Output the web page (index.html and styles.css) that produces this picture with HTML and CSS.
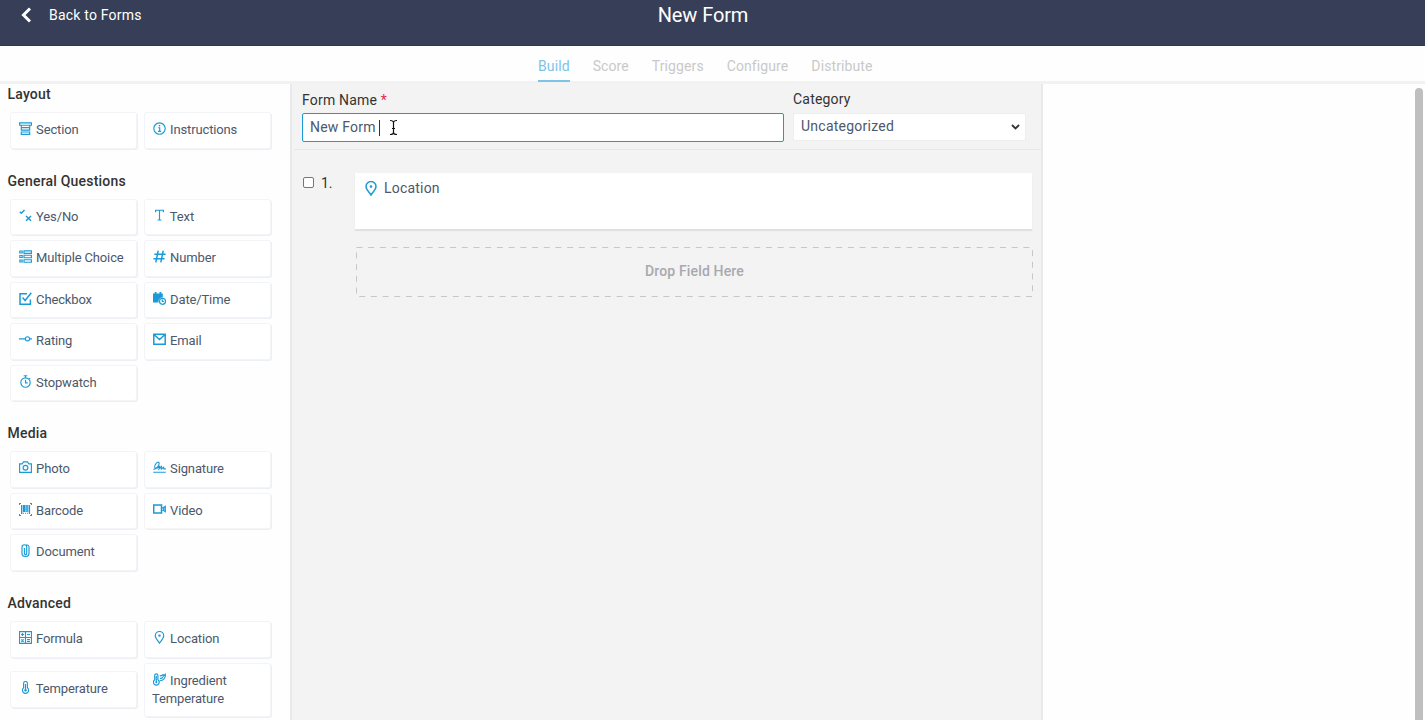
FILE: index.html
```html
<!DOCTYPE html>
<html lang="en">

<head>
    <meta charset="UTF-8">
    <meta name="viewport" content="width=device-width, initial-scale=1.0">
    <title>New Form</title>
    <link rel="stylesheet" href="styles.css">
</head>

<body>
    <header class="topbar">
        <a class="back">
            <svg class="back-icon" viewBox="0 0 11 16"><path d="M9 1.5L2.5 8L9 14.5" /></svg>
            Back to Forms
        </a>
        <h1>New Form</h1>
    </header>

    <nav class="tabs">
        <a class="tab active">Build</a>
        <a class="tab">Score</a>
        <a class="tab">Triggers</a>
        <a class="tab">Configure</a>
        <a class="tab">Distribute</a>
    </nav>

    <main class="workspace">
        <!-- Field palette -->
        <aside class="palette">
            <section class="group">
                <h2>Layout</h2>
                <div class="fields">
                    <div class="field"><svg class="icon" viewBox="0 0 13 13"><path d="M.6 .8h11.8v2.4H.6zM2.3 3.2v2.3h8.4V3.2M2.3 5.7h8.4v2.4H2.3zM2.3 10h8.4v2.3H2.3z" /></svg> Section</div>
                    <div class="field"><svg class="icon" viewBox="0 0 13 13"><circle cx="6.5" cy="6.5" r="5.7" /><path d="M5.2 5.7h1.5v3.6M5 9.4h3.2" /><path class="fill" d="M5.8 2.9h1.5v1.5H5.8z" /></svg> Instructions</div>
                </div>
            </section>

            <section class="group">
                <h2>General Questions</h2>
                <div class="fields">
                    <div class="field"><svg class="icon thick" viewBox="0 0 13 13"><path d="M.8 2.8L2.3 4.2L5.5 .9M7 7l5 4.8M12 7l-5 4.8" /></svg> Yes/No</div>
                    <div class="field"><svg class="icon" viewBox="0 0 13 13"><path d="M2.6 3.3V1.2h7.8v2.1M6.5 1.2v9.8M4.6 11h3.8" /></svg> Text</div>
                    <div class="field"><svg class="icon" viewBox="0 0 13 13"><path d="M.8 1h2.4v2H.8zM.8 5.5h2.4v2H.8zM.8 10h2.4v2H.8zM5 .8h7.4v2.5H5zM5 5.2h7.4v2.5H5zM5 9.7h7.4v2.5H5z" /></svg> Multiple Choice</div>
                    <div class="field"><svg class="icon thick" viewBox="0 0 13 13"><path d="M5.2 .7L2.8 12.3M10.2 .7L7.8 12.3M1.4 4.2h11.2M.4 8.7h11.2" /></svg> Number</div>
                    <div class="field"><svg class="icon thick" viewBox="0 0 13 13"><path d="M8 1.8H1v10.4h10.4V7.5M3.6 5.5l2.5 3L12.3 .8" /></svg> Checkbox</div>
                    <div class="field"><svg class="icon" viewBox="0 0 13 13"><path class="fill" d="M0 1.5h1.7V0h1.8v1.5h3V0h1.8v1.5h1.5v4A4 4 0 0 0 5.6 10.6H0z" /><circle cx="9.5" cy="9.3" r="3" /><path d="M9.3 7.5v2h1.6" /></svg> Date/Time</div>
                    <div class="field"><svg class="icon" viewBox="0 0 13 13"><path d="M0 5.8h6.2M10.8 5.8H13" /><circle cx="8.5" cy="5.8" r="2.1" /></svg> Rating</div>
                    <div class="field"><svg class="icon thick" viewBox="0 0 13 13"><path d="M.8 1.2h11.4v10H.8zM1 1.5l5.5 5L12 1.5" /></svg> Email</div>
                    <div class="field"><svg class="icon" viewBox="0 0 13 13"><circle cx="6.5" cy="7.5" r="4.7" /><path d="M4.7 .7h3.6M6.5 .8v2M10.2 3.2l1 1M6.5 4.8v3h2.2" /></svg> Stopwatch</div>
                </div>
            </section>

            <section class="group">
                <h2>Media</h2>
                <div class="fields">
                    <div class="field"><svg class="icon" viewBox="0 0 13 13"><path d="M.6 2.8h2.6L4.5 .9h4l1.3 1.9h2.6v8.5H.6z" /><circle cx="6.5" cy="6.7" r="2.4" /></svg> Photo</div>
                    <div class="field"><svg class="icon" viewBox="0 0 13 13"><path d="M.2 11.2h12.6M.4 8.5C4 7.7 7 3.8 6 1.6C5-.2 1 3.8 1.7 6.4c.5 1.8 3.4 1.1 5.1-1.6L6 8l2.3-2.3V8l2.3-1.7.2 1.5h2" /></svg> Signature</div>
                    <div class="field"><svg class="icon" viewBox="0 0 13 13"><path class="fill" d="M0 0h2v1H1v1H0zM11 0h2v2h-1V1h-1zM0 11h1v1h1v1H0zM12 11h1v2h-2v-1h1zM2 2h1.4v9H2zM4 2h2.3v7H4zM6.7 2h1.1v7H6.7zM8.2 2h1.1v7H8.2zM9.8 2h1.3v9H9.8zM4 9.8h1v1H4zM6 9.8h1v1H6zM8 9.8h1v1H8z" /></svg> Barcode</div>
                    <div class="field"><svg class="icon" viewBox="0 0 13 13"><path class="stroke-mid" d="M.7 1.9h7.8v8.2H.7z" /><path d="M8.6 4.8h1.5l2.2-1.5v5.4l-2.2-1.5H8.6M10.8 4.5v3" /></svg> Video</div>
                    <div class="field"><svg class="icon" viewBox="0 0 13 13"><path d="M5.4 4v5.2c0 1.8 2.3 1.8 2.3 0V3c0-3-4.7-3-4.7 0v6.4c0 4 7 4 7 0V3.2C10 1.5 8.8.7 7.4.7" /></svg> Document</div>
                </div>
            </section>

            <section class="group">
                <h2>Advanced</h2>
                <div class="fields">
                    <div class="field"><svg class="icon" viewBox="0 0 13 13"><path d="M.5 .6h12v11.8H.5zM6.5 .6v11.8M.5 6.5h12M3.5 2v3M2 3.5h3M8 3.5h3M2.3 8.4l2.4 2.4M4.7 8.4l-2.4 2.4M8 8.6h3M8 10.5h3" /></svg> Formula</div>
                    <div class="field"><svg class="icon" viewBox="0 0 13 13"><path d="M6.5 12.2C4.7 9.6 2.3 7.2 2.3 4.7a4.2 4.2 0 0 1 8.4 0c0 2.5-2.4 4.9-4.2 7.5z" /><circle class="fill" cx="6.5" cy="4.6" r="1.2" /></svg> Location</div>
                    <div class="field"><svg class="icon" viewBox="0 0 13 13"><path d="M4.6 6.8V2.4a1.9 1.9 0 0 1 3.8 0v4.4a3.1 3.1 0 1 1-3.8 0zM6.5 3v6" /><circle class="fill" cx="6.5" cy="9.2" r="1.2" /></svg> Temperature</div>
                    <div class="field"><svg class="icon" viewBox="0 0 13 13"><path d="M1.7 6.8V2.4a1.6 1.6 0 0 1 3.2 0v4.4a2.9 2.9 0 1 1-3.2 0zM3.3 3v6.5M6.8 2.6c1.5.9 2.7-.8 3.8-1.2M9.8 3.6l2.5-2.3c.4 3.6-2 6.6-5.6 6.4M7 5.2c1.3.6 2.3 0 2.8-1.2" /><circle class="fill" cx="3.3" cy="9.2" r="1" /></svg> Ingredient Temperature</div>
                </div>
            </section>
        </aside>

        <!-- Form being built -->
        <section class="builder">
            <div class="form-settings">
                <div class="name-group">
                    <label>Form Name <span class="required">*</span></label>
                    <div class="text-input">New Form <span class="caret"></span>
                        <svg class="cursor" viewBox="0 0 9 17"><path class="cursor-halo" d="M1 1.5c2 0 3.5 .4 3.5 2v10c0 1.6-1.5 2-3.5 2M8 1.5c-2 0-3.5.4-3.5 2v10c0 1.6 1.5 2 3.5 2M3 9.5h3" /><path d="M1 1.5c2 0 3.5 .4 3.5 2v10c0 1.6-1.5 2-3.5 2M8 1.5c-2 0-3.5.4-3.5 2v10c0 1.6 1.5 2 3.5 2M3 9.5h3" /></svg>
                    </div>
                </div>
                <div class="category-group">
                    <label>Category</label>
                    <div class="select">Uncategorized
                        <svg class="chevron" viewBox="0 0 9 6"><path d="M1 1l3.5 3.5L8 1" /></svg>
                    </div>
                </div>
            </div>

            <div class="question">
                <input type="checkbox" class="check">
                <span class="number">1.</span>
                <div class="question-body">
                    <div class="card">
                        <svg class="pin" viewBox="0 0 12 15"><path d="M6 14C4 10.9 1 8.6 1 5.6a5 5 0 0 1 10 0c0 3-3 5.3-5 8.4z" /><circle class="fill" cx="6" cy="5.5" r="1.3" /></svg>
                        Location
                    </div>
                    <div class="drop-zone">
                        <svg class="dashes"><rect x=".5" y=".5" width="676" height="49" /></svg>
                        Drop Field Here
                    </div>
                </div>
            </div>
        </section>

        <div class="side">
            <div class="scroll-thumb"></div>
        </div>
    </main>
</body>

</html>
```
FILE: styles.css
```css
* {
    box-sizing: border-box;
}

body {
    margin: 0;
    height: 720px;
    overflow: hidden;
    display: flex;
    flex-direction: column;
    font-family: Roboto, sans-serif;
    font-size: 14px;
    color: #333333;
    background-color: #fefefe;
}

svg {
    fill: none;
    stroke: #1b9ad6;
}

svg .fill {
    fill: #1b9ad6;
    stroke: none;
}

/* Header */
.topbar {
    flex: none;
    height: 46px;
    display: grid;
    grid-template-columns: 1fr auto 1fr;
    align-items: start;
    background-color: #363f57;
    border-bottom: 1px solid #303950;
    color: #ffffff;
}

.topbar h1 {
    margin: 0;
    padding-right: 19px;
    font-size: 20px;
    font-weight: 400;
    line-height: 31px;
    letter-spacing: -0.1px;
}

.back {
    display: flex;
    align-items: center;
    padding-left: 21px;
    line-height: 30px;
    letter-spacing: 0.2px;
}

.back-icon {
    width: 11px;
    height: 16px;
    margin-right: 17px;
    stroke: #ffffff;
    stroke-width: 3;
}

/* Tabs */
.tabs {
    flex: none;
    height: 38px;
    display: flex;
    gap: 23px;
    padding-left: 538px;
    border-bottom: 3px solid #f2f2f2;
}

.tab {
    height: 36px;
    line-height: 40px;
    letter-spacing: 0.1px;
    color: #c9c9c9;
}

.tab.active {
    color: #7cc3e8;
    border-bottom: 2px solid #7cc3e8;
}

.workspace {
    flex: 1;
    min-height: 0;
    display: flex;
}

/* Left palette */
.palette {
    width: 290px;
    flex: none;
}

.group {
    margin-bottom: 22.8px;
}

.group h2 {
    margin: 0 0 9.3px 7.5px;
    font-size: 14px;
    font-weight: 500;
    line-height: 20px;
    letter-spacing: 0.2px;
}

.fields {
    display: grid;
    grid-template-columns: 125px 125px;
    gap: 7px 9px;
    align-items: center;
    padding-left: 11px;
}

.field {
    min-height: 34.5px;
    padding: 8px 7px;
    line-height: 18px;
    font-size: 13px;
    letter-spacing: -0.14px;
    color: #4c586c;
    background-color: #ffffff;
    border-radius: 2px;
    box-shadow: 0 0 0 1px #f2f4f7, 1px 1px 0 1px #eceff3;
}

.icon {
    width: 13px;
    height: 13px;
    margin: 0 1px;
    vertical-align: -1px;
    stroke-width: 1.15;
}

.icon.thick,
.icon .stroke-mid {
    stroke-width: 1.5;
}

/* Builder */
.builder {
    width: 753px;
    flex: none;
    background-color: #f3f3f3;
    border-left: 2px solid #e9e9eb;
    border-right: 2px solid #e9e9eb;
}

.form-settings {
    display: flex;
    gap: 9px;
    height: 66px;
    margin-left: 2px;
    padding: 6px 0 0 8px;
    border-bottom: 1px solid #e8e8ea;
}

.form-settings label {
    display: block;
    height: 23px;
    line-height: 20px;
    letter-spacing: 0.2px;
}

.required {
    color: #e8274b;
}

.name-group {
    width: 482px;
}

.text-input,
.select {
    display: flex;
    align-items: center;
    height: 29px;
    padding: 0 0 1px 7px;
    letter-spacing: 0.2px;
    color: #4c586c;
    background-color: #ffffff;
    border: 1px solid #1b9ad6;
    border-radius: 2px;
}

.caret {
    width: 1px;
    height: 16px;
    margin: 1px 0 0 3px;
    background-color: #333333;
}

.cursor {
    width: 9px;
    height: 17px;
    margin-left: 9px;
    stroke: #111111;
    stroke-width: 1.2;
}

.cursor-halo {
    stroke: #ffffff;
    stroke-width: 2.5;
}

.category-group {
    width: 233px;
}

.category-group label {
    height: 23px;
    line-height: 19px;
}

.select {
    justify-content: space-between;
    height: 28px;
    padding: 0 5px 2px 7px;
    letter-spacing: 0.25px;
    border-color: #eeeeef;
}

.chevron {
    width: 9px;
    height: 6px;
    margin-top: 2px;
    stroke: #333333;
    stroke-width: 1.8;
}

.question {
    display: flex;
    align-items: flex-start;
    padding: 23px 0 0 11px;
}

.check {
    width: 11px;
    height: 11px;
    margin: 4px 7px 0 0;
    appearance: none;
    background-color: #ffffff;
    border: 1px solid #767676;
    border-radius: 2px;
}

.number {
    width: 34px;
    line-height: 20px;
}

.card {
    display: flex;
    align-items: flex-start;
    width: 677px;
    height: 56px;
    padding: 5px 0 0 10px;
    line-height: 20px;
    letter-spacing: 0.2px;
    color: #4c586c;
    background-color: #ffffff;
    box-shadow: 0 2px 1px #dfe2e5;
}

.pin {
    width: 12px;
    height: 15px;
    margin: 3px 7px 0 0;
    stroke-width: 1.5;
}

/* Drop target */
.drop-zone {
    position: relative;
    width: 677px;
    height: 50px;
    margin: 18px 0 0 1px;
    line-height: 49px;
    text-align: center;
    font-weight: 500;
    letter-spacing: 0.15px;
    color: #a7a9ae;
}

.dashes {
    position: absolute;
    left: 0;
    top: 0;
    width: 677px;
    height: 50px;
    stroke: #c3c8cd;
    stroke-dasharray: 6 5.7;
}

/* Right side with scrollbar */
.side {
    flex: 1;
    display: flex;
    justify-content: flex-end;
    padding-top: 4px;
}

.scroll-thumb {
    width: 8px;
    margin-right: 2px;
    border-radius: 4px 4px 0 0;
    background-color: #bfbfbf;
}
```
